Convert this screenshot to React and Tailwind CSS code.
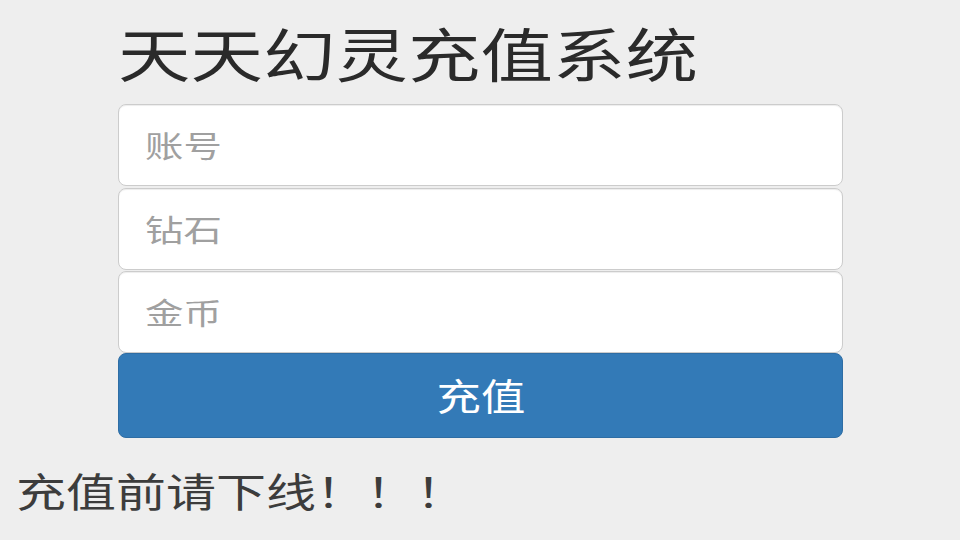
function Field({ label, className, font }) {
  return (
    <div className={"relative h-[82px] w-full " + className}>
      <input
        className="h-full w-full rounded-lg border border-[#cccccc] bg-white pl-[26px] text-[30px] text-[#555] outline-none shadow-[inset_0_1px_1px_rgba(0,0,0,0.075)]"
        aria-label={label}
        style={font}
      />
      <span className="pointer-events-none absolute left-[27px] top-0 flex h-full items-center text-[30px] leading-[30px] text-[#a0a0a0] pb-[2px]">
        <span className="inline-block origin-left scale-x-[1.28] whitespace-nowrap">{label}</span>
      </span>
    </div>
  );
}

export default function App() {
  const font = { fontFamily: '"Noto Sans CJK SC", "Noto Sans", sans-serif' };
  return (
    <div className="w-full h-[540px] bg-[#eeeeee] overflow-hidden" style={font}>
      <div className="flex flex-col pl-[118px] pr-[117px]">
        <div className="h-[104px] flex items-center text-[58px] leading-[58px] text-[#2a2a2a]">
          <span className="inline-block origin-left scale-x-[1.25] whitespace-nowrap">天天幻灵充值系统</span>
        </div>
        <Field label="账号" className="mb-[2px]" font={font} />
        <Field label="钻石" className="mb-[1px]" font={font} />
        <Field label="金币" className="" font={font} />
        <button
          className="h-[85px] w-full rounded-lg border border-[#2e6da4] bg-[#337ab7] text-white text-[37px] flex items-center justify-center"
          style={font}
        >
          <span className="inline-block scale-x-[1.2]">充值</span>
        </button>
      </div>
      <div className="mt-[32px] pl-[16px] text-[40px] leading-[40px] text-[#3c3c3c]">
        <span className="inline-block origin-left scale-x-[1.25] whitespace-nowrap">充值前请下线！！！</span>
      </div>
    </div>
  );
}
